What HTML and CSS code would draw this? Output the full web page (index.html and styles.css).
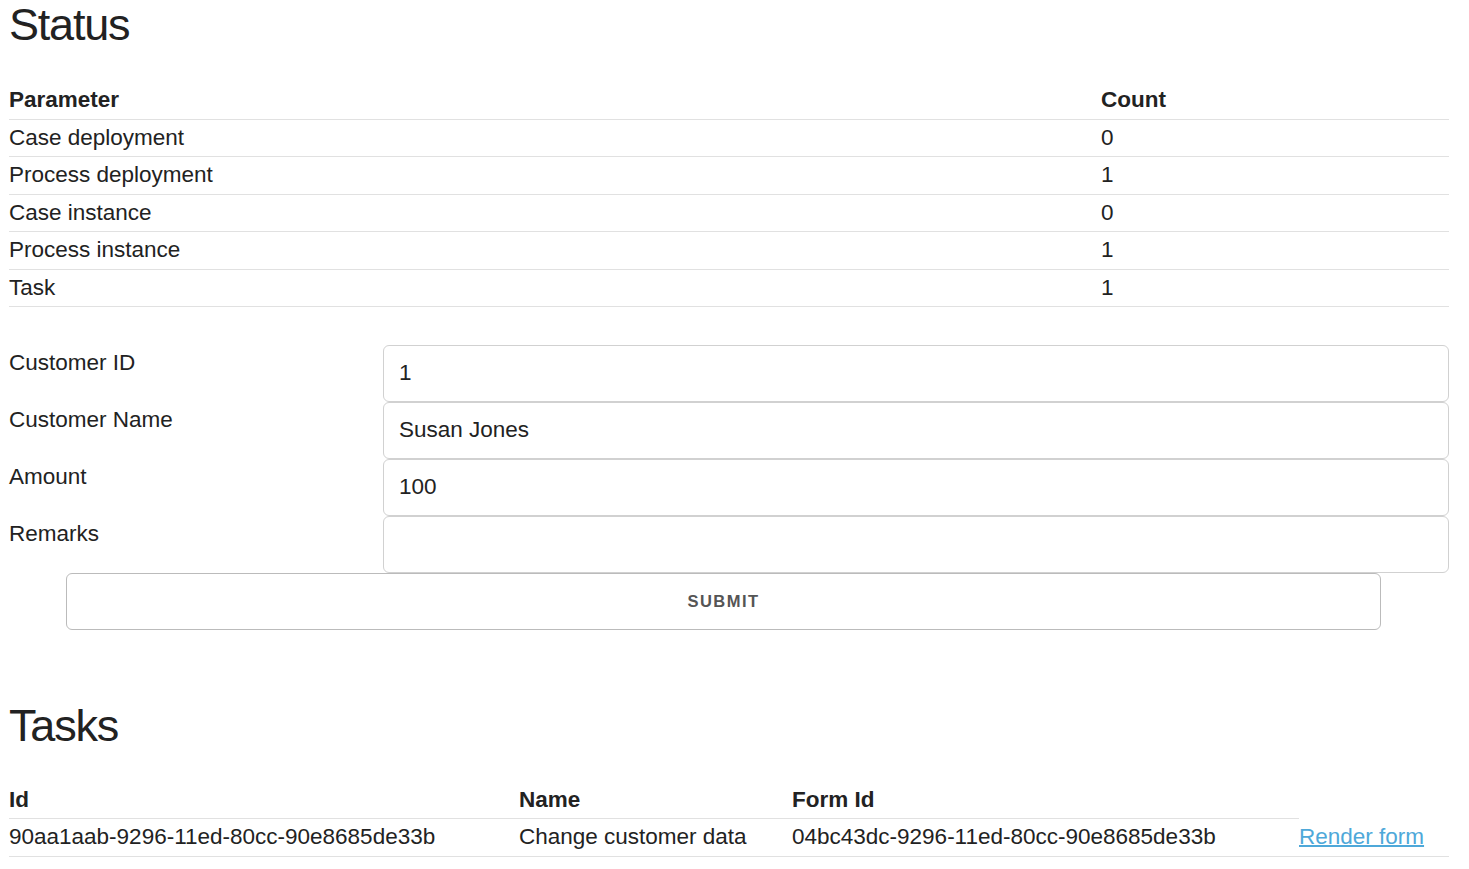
FILE: index.html
```html
<!DOCTYPE html>
<html lang="en">
<head>
<meta charset="utf-8">
<title>Status</title>
<link rel="stylesheet" href="styles.css">
</head>
<body>
<div class="page">
  <h1 class="title">Status</h1>
  <table class="grid status">
    <thead>
      <tr><th class="col-param">Parameter</th><th>Count</th></tr>
    </thead>
    <tbody>
      <tr><td>Case deployment</td><td>0</td></tr>
      <tr><td>Process deployment</td><td>1</td></tr>
      <tr><td>Case instance</td><td>0</td></tr>
      <tr><td>Process instance</td><td>1</td></tr>
      <tr><td>Task</td><td>1</td></tr>
    </tbody>
  </table>

  <form class="form">
    <div class="form-grid">
      <label class="label" for="cid">Customer ID</label>
      <input class="field" id="cid" type="text" value="1">
      <label class="label" for="cname">Customer Name</label>
      <input class="field" id="cname" type="text" value="Susan Jones">
      <label class="label" for="amount">Amount</label>
      <input class="field" id="amount" type="text" value="100">
      <label class="label" for="remarks">Remarks</label>
      <input class="field" id="remarks" type="text" value="">
    </div>
    <button class="submit" type="button">Submit</button>
  </form>

  <h1 class="title tasks-title">Tasks</h1>
  <table class="grid tasks">
    <thead>
      <tr><th class="col-id">Id</th><th class="col-name">Name</th><th class="col-form">Form Id</th></tr>
    </thead>
    <tbody>
      <tr>
        <td>90aa1aab-9296-11ed-80cc-90e8685de33b</td>
        <td>Change customer data</td>
        <td>04bc43dc-9296-11ed-80cc-90e8685de33b</td>
        <td><a class="link" href="#">Render form</a></td>
      </tr>
    </tbody>
  </table>
</div>
</body>
</html>
```

FILE: styles.css
```css
html, body {
  margin: 0;
  padding: 0;
  background: #fff;
}

body {
  font-family: "Liberation Sans", Arial, sans-serif;
  font-size: 22.5px;
  line-height: 36px;
  color: #222;
}

.page {
  padding: 0 20px 0 9px;
}

.title {
  margin: 0 0 32px 0;
  font-size: 45px;
  line-height: 50px;
  font-weight: 400;
  letter-spacing: -1.2px;
  color: #222;
}

.tasks-title {
  margin-top: 71px;
  margin-bottom: 31px;
}

.grid {
  width: 100%;
  border-collapse: collapse;
  border-spacing: 0;
}

.grid th,
.grid td {
  padding: 0;
  text-align: left;
  vertical-align: top;
  border-bottom: 1px solid #e1e1e1;
  line-height: 36.5px;
}

.grid th {
  font-weight: 700;
}

.col-param {
  width: 1092px;
}

.col-id {
  width: 510px;
}

.col-name {
  width: 273px;
}

.col-form {
  width: 507px;
}

.form {
  margin-top: 37.5px;
}

.form-grid {
  display: grid;
  grid-template-columns: 374px 1fr;
}

.label {
  display: block;
  line-height: 36px;
  color: #222;
}

.field {
  box-sizing: border-box;
  height: 57px;
  width: 100%;
  margin: 0;
  padding: 9px 15px;
  border: 1.5px solid #d1d1d1;
  border-radius: 6px;
  background: #fff;
  font-family: "Liberation Sans", Arial, sans-serif;
  font-size: 22.5px;
  color: #222;
  outline: none;
}

.submit {
  display: block;
  box-sizing: border-box;
  margin: 0 0 0 57px;
  width: 1315px;
  height: 57px;
  padding: 0 45px;
  border: 1.5px solid #bbb;
  border-radius: 6px;
  background: transparent;
  color: #555;
  font-family: "Liberation Sans", Arial, sans-serif;
  font-size: 16.5px;
  font-weight: 700;
  letter-spacing: 1.5px;
  text-transform: uppercase;
  text-align: center;
  cursor: pointer;
}

.link {
  color: #4ea8d9;
  text-decoration: underline;
  text-decoration-thickness: 2px;
}
```
